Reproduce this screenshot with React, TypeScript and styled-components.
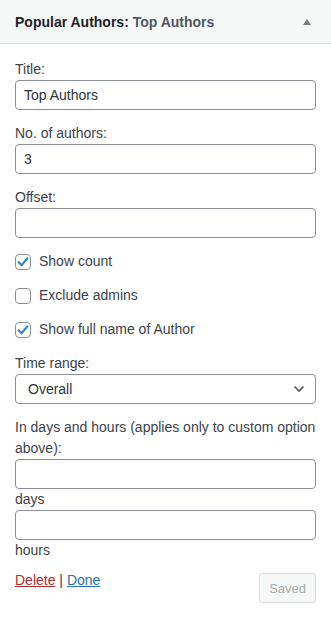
import { ReactNode } from 'react';
import styled, { createGlobalStyle } from 'styled-components';

const GlobalStyle = createGlobalStyle`
  html, body {
    margin: 0;
    padding: 0;
    background: #ffffff;
  }
  body {
    font-family: "Liberation Sans", Arial, sans-serif;
    font-size: 14px;
    line-height: 1.5;
    color: #3c434a;
  }
  * {
    box-sizing: border-box;
  }
`;

const Widget = styled.div`
  width: 331px;
  background: #ffffff;
  border-bottom: 1px solid #dcdcde;
`;

const Header = styled.div`
  height: 44px;
  display: flex;
  align-items: center;
  justify-content: space-between;
  padding: 0 14px 0 15px;
  background: #f6f7f7;
  border-bottom: 1px solid #dcdcde;
`;

const HeaderTitle = styled.h3`
  margin: 0;
  font-size: 14px;
  font-weight: 600;
  color: #1d2327;
  line-height: 1;
`;

const HeaderSub = styled.span`
  color: #50575e;
`;

const Toggle = styled.button`
  width: 20px;
  height: 20px;
  padding: 0;
  border: 0;
  background: transparent;
  display: grid;
  place-items: center;
  color: #787c82;
`;

const Body = styled.form`
  padding: 15px 15px 15px;
`;

const Field = styled.div`
  & + & {
    margin-top: 13px;
  }
`;

const Label = styled.label`
  display: block;
  line-height: 21px;
  color: #3c434a;
`;

const Note = styled.div`
  line-height: 21px;
  color: #3c434a;
`;

const TextInput = styled.input`
  display: block;
  width: 100%;
  height: 30px;
  padding: 0 8px;
  margin: 0;
  border: 1px solid #8c8f94;
  border-radius: 4px;
  background: #ffffff;
  font-family: inherit;
  font-size: 14px;
  color: #2c3338;
  outline: none;
`;

const SelectBox = styled.div`
  position: relative;
  height: 30px;
  border: 1px solid #8c8f94;
  border-radius: 4px;
  display: flex;
  align-items: center;
  justify-content: space-between;
  padding: 0 10px 0 12px;
  color: #2c3338;
`;

const CheckRow = styled.label`
  display: flex;
  align-items: center;
  gap: 8px;
  line-height: 21px;
  color: #3c434a;
`;

const Box = styled.span<{ checked?: boolean }>`
  width: 16px;
  height: 16px;
  border: 1px solid #8c8f94;
  border-radius: 4px;
  background: #ffffff;
  display: grid;
  place-items: center;
  flex-shrink: 0;
`;

const Actions = styled.div`
  display: flex;
  justify-content: space-between;
  align-items: flex-start;
  margin-top: 9px;
`;

const Links = styled.div`
  line-height: 21px;
  color: #3c434a;
`;

const Link = styled.a<{ danger?: boolean }>`
  color: ${p => (p.danger ? '#b32d2e' : '#2271b1')};
  text-decoration: underline;
`;

const SavedButton = styled.button`
  margin-top: 3px;
  height: 30px;
  padding: 0 9px;
  border: 1px solid #dcdcde;
  border-radius: 3px;
  background: #f6f7f7;
  color: #a7aaad;
  font-family: inherit;
  font-size: 13px;
`;

const Checkbox = ({ checked, children }: { checked?: boolean; children: ReactNode }) => (
  <CheckRow>
    <Box checked={checked}>
      {checked && (
        <svg width="14" height="14" viewBox="0 0 14 14">
          <path d="M2.6 7.2 L5.6 10.2 L11.4 3.4" fill="none" stroke="#3582c4" strokeWidth="2.2" strokeLinecap="round" strokeLinejoin="round" />
        </svg>
      )}
    </Box>
    {children}
  </CheckRow>
);

export default function App() {
  return (
    <>
      <GlobalStyle />
      <Widget>
        <Header>
          <HeaderTitle>
            Popular Authors: <HeaderSub>Top Authors</HeaderSub>
          </HeaderTitle>
          <Toggle aria-label="Toggle">
            <svg width="8" height="6" viewBox="0 0 8 6">
              <path d="M4 0 L8 6 L0 6 Z" fill="currentColor" />
            </svg>
          </Toggle>
        </Header>
        <Body>
          <Field>
            <Label>Title:</Label>
            <TextInput defaultValue="Top Authors" />
          </Field>
          <Field>
            <Label>No. of authors:</Label>
            <TextInput defaultValue="3" />
          </Field>
          <Field>
            <Label>Offset:</Label>
            <TextInput defaultValue="" />
          </Field>
          <Field>
            <Checkbox checked>Show count</Checkbox>
          </Field>
          <Field>
            <Checkbox>Exclude admins</Checkbox>
          </Field>
          <Field>
            <Checkbox checked>Show full name of Author</Checkbox>
          </Field>
          <Field>
            <Label>Time range:</Label>
            <SelectBox>
              <span>Overall</span>
              <svg width="12" height="8" viewBox="0 0 12 8">
                <path d="M1.5 1.5 L6 6 L10.5 1.5" fill="none" stroke="#50575e" strokeWidth="1.6" />
              </svg>
            </SelectBox>
          </Field>
          <Field>
            <Label>In days and hours (applies only to custom option above):</Label>
            <TextInput defaultValue="" />
            <Note>days</Note>
            <TextInput defaultValue="" />
            <Note>hours</Note>
          </Field>
          <Actions>
            <Links>
              <Link danger href="#">Delete</Link> | <Link href="#">Done</Link>
            </Links>
            <SavedButton disabled>Saved</SavedButton>
          </Actions>
        </Body>
      </Widget>
    </>
  );
}
